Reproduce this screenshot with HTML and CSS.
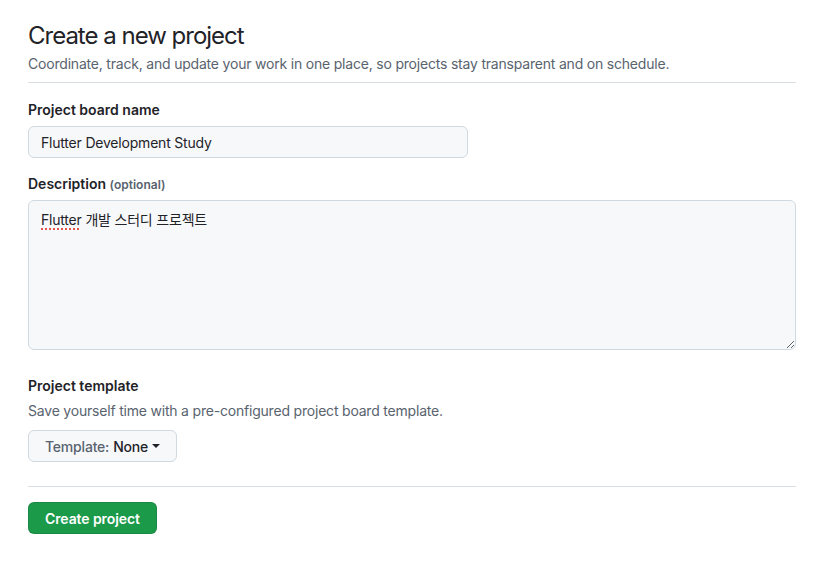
FILE: index.html
```html
<!DOCTYPE html>
<html lang="en">
<head>
<meta charset="utf-8">
<title>Create a new project</title>
<link rel="stylesheet" href="styles.css">
</head>
<body>
<main class="page">
  <div class="subhead">
    <h1 class="subhead-title">Create a new project</h1>
    <p class="subhead-desc">Coordinate, track, and update your work in one place, so projects stay transparent and on schedule.</p>
  </div>

  <div class="form-group">
    <label class="label" for="name">Project board name</label>
    <input class="input" id="name" type="text" value="Flutter Development Study">
  </div>

  <div class="form-group">
    <div class="label">Description <span class="optional">(optional)</span></div>
    <div class="textarea"><span class="misspelled">Flutter</span> 개발 스터디 프로젝트</div>
  </div>

  <div class="form-group template-group">
    <div class="label">Project template</div>
    <p class="note">Save yourself time with a pre-configured project board template.</p>
    <button class="btn" type="button"><span class="btn-muted">Template:</span> <span class="btn-value">None</span><span class="caret"></span></button>
  </div>

  <hr class="divider">

  <button class="btn-primary" type="button">Create project</button>
</main>
</body>
</html>
```
FILE: styles.css
```css
* { box-sizing: border-box; }

body {
  margin: 0;
  background: #ffffff;
  color: #1f2328;
  font-family: Inter, "Liberation Sans", Arial, "Noto Sans CJK KR", sans-serif;
  font-size: 14px;
  line-height: 1.5;
  letter-spacing: -0.2px;
}

.page {
  width: 768px;
  margin-left: 28px;
  padding-top: 18px;
}

.subhead {
  padding-bottom: 8px;
  border-bottom: 1px solid #d8dee4;
  margin-bottom: 16px;
}

.subhead-title {
  margin: 0;
  font-size: 24px;
  line-height: 36px;
  font-weight: 400;
  letter-spacing: -1px;
  color: #1f2328;
}

.subhead-desc {
  margin: 0;
  color: #59636e;
  line-height: 20px;
}

.form-group { margin-bottom: 15px; }

.label {
  display: block;
  height: 21px;
  font-weight: 600;
  line-height: 21px;
  margin-bottom: 6px;
  color: #1f2328;
  letter-spacing: 0;
}

.optional {
  font-size: 12px;
  line-height: 1;
  color: #59636e;
}

.input {
  display: block;
  width: 440px;
  height: 32px;
  padding: 5px 12px;
  font: inherit;
  font-size: 14px;
  letter-spacing: -0.2px;
  color: #1f2328;
  background: #f6f8fa;
  border: 1px solid #d1d9e0;
  border-radius: 6px;
  outline: none;
}

.textarea {
  width: 768px;
  height: 150px;
  padding: 8px 12px;
  background: #f6f8fa;
  border: 1px solid #d1d9e0;
  border-radius: 6px;
  resize: both;
  overflow: auto;
  line-height: 21px;
}

.misspelled {
  text-decoration: underline dotted #e5534b;
  text-decoration-thickness: 2px;
  text-underline-offset: 3px;
}

.template-group { margin-top: 25px; margin-bottom: 0; }
.template-group .label { margin-bottom: 4px; }

.note {
  margin: 0 0 9px;
  color: #59636e;
  line-height: 21px;
}

.btn {
  display: inline-flex;
  align-items: center;
  height: 32px;
  padding: 0 16px;
  font: inherit;
  font-size: 14px;
  font-weight: 500;
  letter-spacing: -0.2px;
  color: #59636e;
  background: #f6f8fa;
  border: 1px solid #d1d9e0;
  border-radius: 6px;
}

.btn-muted { margin-right: 4px; }

.btn-value { color: #1f2328; font-weight: 500; }

.caret {
  display: inline-block;
  width: 0;
  height: 0;
  margin-left: 4px;
  border-top: 4px solid #1f2328;
  border-left: 4px solid transparent;
  border-right: 4px solid transparent;
}

.divider {
  margin: 24px 0 15px;
  border: 0;
  border-top: 1px solid #d8dee4;
  height: 0;
}

.btn-primary {
  height: 32px;
  padding: 0 16px;
  font: inherit;
  font-size: 14px;
  font-weight: 600;
  letter-spacing: -0.1px;
  color: #ffffff;
  background: #1b9a4a;
  border: 1px solid rgba(31, 35, 40, 0.15);
  border-radius: 6px;
}
```
